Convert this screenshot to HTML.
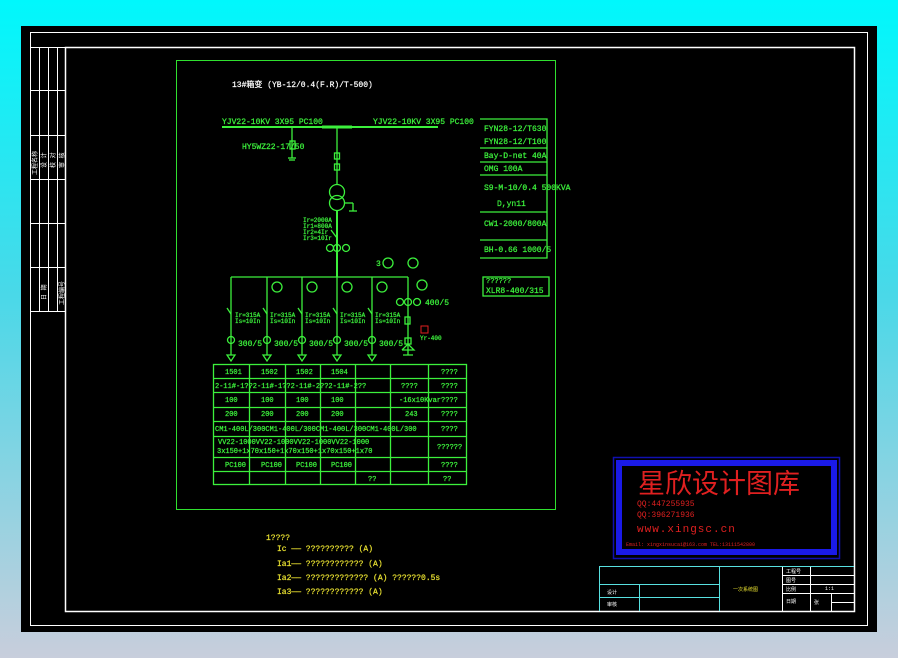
<!DOCTYPE html>
<html><head><meta charset="utf-8"><style>
html,body{margin:0;padding:0;width:898px;height:658px;overflow:hidden;background:#8fdce8;}
svg{display:block}
text{font-family:"Liberation Mono","WenQuanYi Zen Hei",monospace;}
.g text{stroke:#3cf03c;stroke-width:0.25}
</style></head><body>
<svg width="898" height="658" viewBox="0 0 898 658" xmlns="http://www.w3.org/2000/svg">
<defs><linearGradient id="bg" x1="0" y1="0" x2="0" y2="1"><stop offset="0" stop-color="#00f8fc"/><stop offset="0.45" stop-color="#4ad8e8"/><stop offset="1" stop-color="#c8cedc"/></linearGradient></defs>
<rect width="898" height="658" fill="url(#bg)"/>
<rect x="21" y="26" width="856" height="606" fill="#000"/>
<g stroke="#fff" fill="none" stroke-width="1">
<rect x="30.5" y="32.5" width="837" height="593"/>
<rect x="65.5" y="47.5" width="789" height="564" stroke-width="1.5"/>
<line x1="30" y1="47.5" x2="65" y2="47.5"/>
<line x1="39.5" y1="47" x2="39.5" y2="311"/><line x1="48.5" y1="47" x2="48.5" y2="311"/><line x1="57.5" y1="47" x2="57.5" y2="311"/>
<line x1="30" y1="90.5" x2="65" y2="90.5"/><line x1="30" y1="135.5" x2="65" y2="135.5"/><line x1="30" y1="179.5" x2="65" y2="179.5"/><line x1="30" y1="223.5" x2="65" y2="223.5"/><line x1="30" y1="267.5" x2="65" y2="267.5"/><line x1="30" y1="311.5" x2="65" y2="311.5"/>
</g>
<g fill="#fff" font-size="6">
<text transform="translate(37,175) rotate(-90)">工程名称</text>
<text transform="translate(46,168) rotate(-90)">设 计</text>
<text transform="translate(55,168) rotate(-90)">校 对</text>
<text transform="translate(64,168) rotate(-90)">审 核</text>
<text transform="translate(64,305) rotate(-90)">工程编号</text>
<text transform="translate(46,300) rotate(-90)">日 期</text>
</g>
<rect x="176.5" y="60.5" width="379" height="449" fill="none" stroke="#2fe02f" stroke-width="1"/>
<text x="232" y="87" fill="#fff" font-size="8" stroke="#fff" stroke-width="0.2">13#箱变 (YB-12/0.4(F.R)/T-500)</text>
<g stroke="#3cf03c" fill="none" stroke-width="1.3">
<line x1="222" y1="127" x2="438" y2="127" stroke-width="2"/>
<line x1="322" y1="127" x2="352" y2="127" stroke-width="3"/>
<line x1="292" y1="127" x2="292" y2="150"/><rect x="290" y="141" width="5" height="8"/>
<line x1="292" y1="150" x2="292" y2="158"/><line x1="288" y1="158" x2="296" y2="158"/><line x1="289" y1="160" x2="295" y2="160"/>
<line x1="337" y1="127" x2="337" y2="185"/>
<rect x="334.5" y="153" width="5" height="6"/><rect x="334.5" y="164" width="5" height="6"/>
<circle cx="337" cy="192" r="7.5"/><circle cx="337" cy="203" r="7.5"/>
<line x1="344" y1="203" x2="353" y2="203"/><line x1="353" y1="203" x2="353" y2="211"/><line x1="349" y1="211" x2="357" y2="211"/>
<line x1="337" y1="211" x2="337" y2="277" stroke-width="2"/>
<line x1="337" y1="238" x2="331" y2="230"/>
<circle cx="330" cy="248" r="3.5"/><circle cx="337" cy="248" r="3.5"/><circle cx="346" cy="248" r="3.5"/>
<circle cx="388" cy="263" r="5"/><circle cx="413" cy="263" r="5"/>
<line x1="231" y1="277" x2="408" y2="277"/>
<line x1="408" y1="277" x2="408" y2="355"/>
<circle cx="422" cy="285" r="5"/>
<circle cx="400" cy="302" r="3.5"/><circle cx="408" cy="302" r="3.5"/><circle cx="417" cy="302" r="3.5"/>
<rect x="405" y="317" width="5" height="7"/><rect x="405" y="338" width="6" height="6"/>
<path d="M402 350 L408 344 L414 350 L402 350 M403 355 L413 355"/>
<path d="M231 277 V355 M267 277 V355 M302 277 V355 M337 277 V355 M372 277 V355"/>
<path d="M231 314 l-4 -6 M267 314 l-4 -6 M302 314 l-4 -6 M337 314 l-4 -6 M372 314 l-4 -6"/>
<circle cx="231" cy="340" r="3.5"/><circle cx="267" cy="340" r="3.5"/><circle cx="302" cy="340" r="3.5"/><circle cx="337" cy="340" r="3.5"/><circle cx="372" cy="340" r="3.5"/>
<circle cx="277" cy="287" r="5"/><circle cx="312" cy="287" r="5"/><circle cx="347" cy="287" r="5"/><circle cx="382" cy="287" r="5"/>
<path d="M227 355 h8 l-4 6z M263 355 h8 l-4 6z M298 355 h8 l-4 6z M333 355 h8 l-4 6z M368 355 h8 l-4 6z"/>
<path d="M480 119 H547 V258 H480 M480 148 H547 M480 162 H547 M480 175 H547 M480 212 H547 M480 240 H547"/>
<rect x="483" y="277" width="66" height="19"/>
<rect x="213.5" y="364.5" width="253" height="120"/>
<path d="M213 378.5 H467 M213 392.5 H467 M213 407.5 H467 M213 421.5 H467 M213 436.5 H467 M213 457.5 H467 M213 471.5 H467"/>
<path d="M249.5 364 V485 M285.5 364 V485 M320.5 364 V485 M355.5 364 V485 M390.5 364 V485 M428.5 364 V485"/>
</g>
<g class="g" fill="#3cf03c" font-size="8">
<text x="222" y="124">YJV22-10KV 3X95 PC100</text>
<text x="373" y="124">YJV22-10KV 3X95 PC100</text>
<text x="242" y="149">HY5WZ22-17/50</text>
<text x="484" y="131">FYN28-12/T630</text>
<text x="484" y="144">FYN28-12/T100</text>
<text x="484" y="158">Bay-D-net  40A</text>
<text x="484" y="171">OMG 100A</text>
<text x="484" y="190">S9-M-10/0.4 500KVA</text>
<text x="497" y="206">D,yn11</text>
<text x="484" y="226">CW1-2000/800A</text>
<text x="484" y="252">BH-0.66 1000/5</text>
<text x="486" y="283" font-size="7">??????</text>
<text x="486" y="293">XLR8-400/315</text>
<text x="425" y="305">400/5</text>
<text x="376" y="266">3</text>
<g font-size="6"><text x="303" y="222">Ir=2000A</text><text x="303" y="228">Ir1=800A</text><text x="303" y="234">Ir2=4Ir</text><text x="303" y="240">Ir3=10Ir</text>
<text x="235" y="317">Ir=315A</text><text x="235" y="323">Is=10In</text>
<text x="270" y="317">Ir=315A</text><text x="270" y="323">Is=10In</text>
<text x="305" y="317">Ir=315A</text><text x="305" y="323">Is=10In</text>
<text x="340" y="317">Ir=315A</text><text x="340" y="323">Is=10In</text>
<text x="375" y="317">Ir=315A</text><text x="375" y="323">Is=10In</text>
<text x="420" y="340">Yr-400</text></g>
<text x="238" y="346">300/5</text><text x="274" y="346">300/5</text><text x="309" y="346">300/5</text><text x="344" y="346">300/5</text><text x="379" y="346">300/5</text>
<g font-size="7">
<text x="225" y="374">1501</text><text x="261" y="374">1502</text><text x="296" y="374">1502</text><text x="331" y="374">1504</text><text x="441" y="374">????</text>
<text x="215" y="388">2-11#-1??2-11#-1??2-11#-2??2-11#-2??</text><text x="401" y="388">????</text><text x="441" y="388">????</text>
<text x="225" y="402">100</text><text x="261" y="402">100</text><text x="296" y="402">100</text><text x="331" y="402">100</text><text x="399" y="402">-16x10Kvar</text><text x="441" y="402">????</text>
<text x="225" y="416">200</text><text x="261" y="416">200</text><text x="296" y="416">200</text><text x="331" y="416">200</text><text x="405" y="416">243</text><text x="441" y="416">????</text>
<text x="215" y="431">CM1-400L/300CM1-400L/300CM1-400L/300CM1-400L/300</text><text x="441" y="431">????</text>
<text x="218" y="444">VV22-1000VV22-1000VV22-1000VV22-1000</text>
<text x="217" y="453">3x150+1x70x150+1x70x150+1x70x150+1x70</text><text x="437" y="449">??????</text>
<text x="225" y="467">PC100</text><text x="261" y="467">PC100</text><text x="296" y="467">PC100</text><text x="331" y="467">PC100</text><text x="441" y="467">????</text>
<text x="368" y="481">??</text><text x="443" y="481">??</text>
</g></g>
<rect x="421" y="326" width="7" height="7" fill="none" stroke="#e02020"/>
<g fill="#e8e030" font-size="8" stroke="#e8e030" stroke-width="0.2">
<text x="266" y="540">1????</text>
<text x="277" y="551">Ic —— ??????????    (A)</text>
<text x="277" y="566">Ia1—— ????????????     (A)</text>
<text x="277" y="580">Ia2—— ?????????????    (A)  ??????0.5s</text>
<text x="277" y="594">Ia3—— ????????????     (A)</text>
</g>
<rect x="613.5" y="457.5" width="226" height="101" fill="none" stroke="#1010b0" stroke-width="1.5"/>
<rect x="619" y="463" width="215" height="89" fill="#000" stroke="#1a1ae8" stroke-width="6"/>
<text x="638" y="493" fill="#e02020" font-size="27" font-family="Noto Sans CJK SC,sans-serif">星欣设计图库</text>
<g fill="#e02020" font-size="8"><text x="637" y="506">QQ:447255935</text><text x="637" y="517">QQ:396271936</text>
<text x="637" y="532" font-size="11" letter-spacing="1">www.xingsc.cn</text>
<text x="626" y="546" font-size="5">Email: xingxinsucai@163.com  TEL:13111542800</text></g>
<g stroke="#fff" fill="none">
<path d="M599.5 566 V611 M719.5 566 V611 M599 584.5 H719 M599 597.5 H719 M639.5 584 V611" stroke="#58e0e0"/>
<path d="M782 575.5 H854 M782 584.5 H854 M782 593.5 H854 M810.5 566 V611 M831.5 593 V611 M831 602.5 H854 M782.5 566 V611"/>
<line x1="599" y1="566.5" x2="854" y2="566.5" stroke="#58e0e0"/>
</g>
<g fill="#fff" font-size="5"><text x="607" y="594">设计</text><text x="607" y="606">审核</text><text x="786" y="573">工程号</text><text x="786" y="582">图号</text><text x="786" y="591">比例</text><text x="786" y="603">日期</text><text x="814" y="604">张</text><text x="825" y="590">1:1</text></g>
<text x="733" y="591" fill="#e8e030" font-size="5">一次系统图</text>
</svg>
</body></html>
